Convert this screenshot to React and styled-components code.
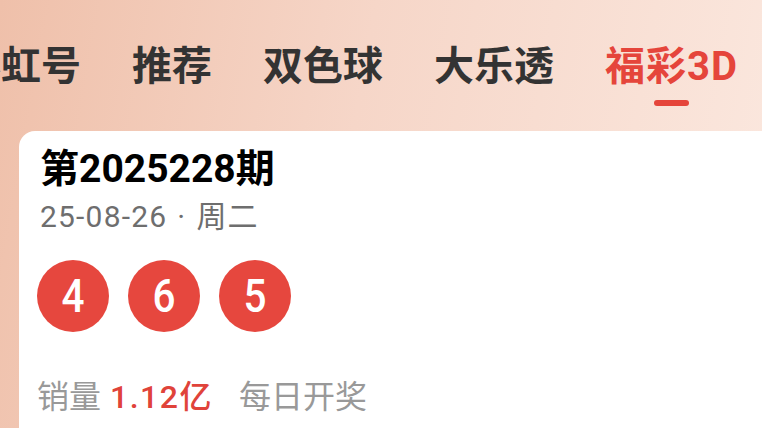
import React from "react";
import styled, { createGlobalStyle, css } from "styled-components";

const GlobalStyle = createGlobalStyle`
  html, body {
    margin: 0;
    padding: 0;
    width: 762px;
    height: 428px;
    overflow: hidden;
  }
  body {
    font-family: "Roboto", "Noto Sans CJK SC", "Noto Sans", sans-serif;
    background: linear-gradient(100deg, #efc0aa 0%, #f6d6c8 45%, #fbe8df 100%);
  }
`;

const tabs = ["彩虹号", "推荐", "双色球", "大乐透", "福彩3D"];
const balls = [4, 6, 5];

const Page = styled.div`
  width: 762px;
  height: 428px;
  display: flex;
  flex-direction: column;
  overflow: hidden;
`;

const TabBar = styled.div`
  height: 131px;
  overflow: hidden;
  flex-shrink: 0;
`;

const TabStrip = styled.div`
  display: flex;
  gap: 51px;
  margin-left: -39px;
  padding-top: 40px;
`;

const Tab = styled.div`
  position: relative;
  font-size: 40px;
  line-height: 54px;
  font-weight: 700;
  white-space: nowrap;
  color: #333333;

  ${(p) =>
    p.$active &&
    css`
      color: #e5453b;
      letter-spacing: 1px;
      &::after {
        content: "";
        position: absolute;
        left: 50%;
        bottom: -12px;
        width: 35px;
        height: 6px;
        margin-left: -17px;
        border-radius: 3px;
        background: #e5453b;
      }
    `}
`;

const Card = styled.div`
  flex: 1;
  margin-left: 19px;
  margin-right: -20px;
  background: #ffffff;
  border-radius: 16px 16px 0 0;
  padding: 13px 20px 0 21px;
  display: flex;
  flex-direction: column;
`;

const Issue = styled.div`
  font-size: 39px;
  font-weight: 700;
  color: #000000;
  line-height: 50px;
`;

const DateLine = styled.div`
  font-size: 30px;
  color: #6e6e6e;
  line-height: 40px;
  margin-top: 3px;
  letter-spacing: 1.2px;
`;

const Dot = styled.span`
  margin: 0 10px;
`;

const BallRow = styled.div`
  display: flex;
  gap: 19px;
  margin-left: -3px;
  margin-top: 23px;
`;

const Ball = styled.div`
  width: 72px;
  height: 72px;
  border-radius: 50%;
  background: #e6473e;
  color: #ffffff;
  display: flex;
  align-items: center;
  justify-content: center;
  font-size: 46px;
  font-weight: 500;
`;

const BallNum = styled.span`
  display: inline-block;
  transform: scaleX(0.88);
`;

const Footer = styled.div`
  margin-top: 45px;
  font-size: 32px;
  line-height: 40px;
  color: #999999;
  display: flex;
  align-items: baseline;
  gap: 26px;
  margin-left: -3px;
`;

const Sales = styled.span`
  display: flex;
  align-items: baseline;
  gap: 9px;
`;

const Amount = styled.span`
  color: #e0433a;
  font-weight: 500;
  letter-spacing: 1.5px;
`;

export default function App() {
  return (
    <Page>
      <GlobalStyle />
      <TabBar>
        <TabStrip>
          {tabs.map((t) => (
            <Tab key={t} $active={t === "福彩3D"}>
              {t}
            </Tab>
          ))}
        </TabStrip>
      </TabBar>
      <Card>
        <Issue>第2025228期</Issue>
        <DateLine>
          25-08-26<Dot>·</Dot>周二
        </DateLine>
        <BallRow>
          {balls.map((n, i) => (
            <Ball key={i}>
              <BallNum>{n}</BallNum>
            </Ball>
          ))}
        </BallRow>
        <Footer>
          <Sales>
            销量<Amount>1.12亿</Amount>
          </Sales>
          <span>每日开奖</span>
        </Footer>
      </Card>
    </Page>
  );
}
